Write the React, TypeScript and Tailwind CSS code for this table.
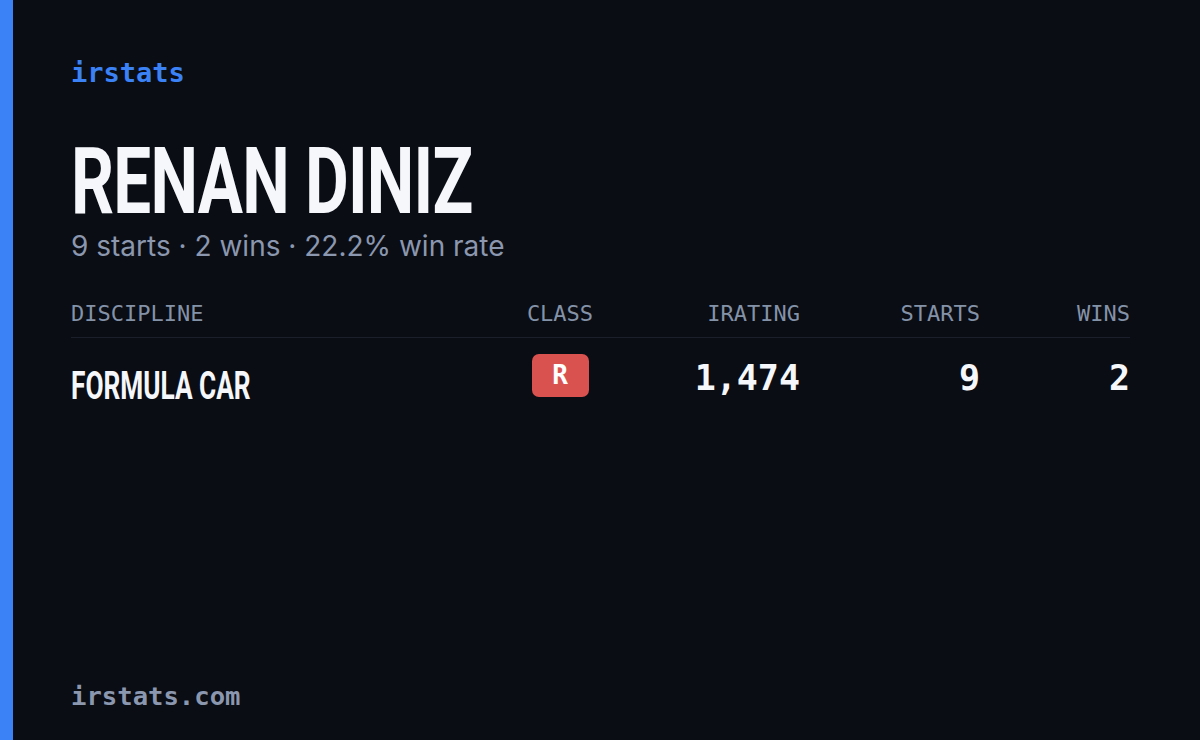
const mono = { fontFamily: '"DejaVu Sans Mono", "Liberation Mono", monospace' };

const rows = [
  { discipline: "FORMULA CAR", cls: "R", irating: "1,474", starts: "9", wins: "2" },
];

export default function App() {
  return (
    <div className="flex h-[740px] w-[1200px] overflow-hidden bg-[#0a0d14]">
      <div className="w-[13px] shrink-0 bg-[#3b82f6]" />
      <div className="flex flex-1 flex-col pl-[58px] pr-[70px]">
        <div
          className="mt-[55px] text-[27px] font-bold leading-[36px] text-[#3b82f6]"
          style={mono}
        >
          irstats
        </div>

        <h1
          className="mt-[48px] h-[86px] origin-left scale-x-[0.731] whitespace-nowrap text-[92px] font-bold leading-[86px] tracking-[-1px] text-[#f5f7fb]"
          style={{ fontFamily: 'Roboto, "Liberation Sans", sans-serif' }}
        >
          RENAN DINIZ
        </h1>
        <div
          className="mt-[2px] text-[28px] leading-[38px] text-[#8b97ae]"
          style={{ fontFamily: 'Inter, "Noto Sans", sans-serif' }}
        >
          9 starts · 2 wins · 22.2% win rate
        </div>

        <div className="mt-[36px]">
          <div
            className="grid grid-cols-[1fr_100px_190px_180px_150px] border-b border-[#1a1f2b] pb-[10px] text-[22px] leading-[26px] text-[#8492a8]"
            style={mono}
          >
            <div>DISCIPLINE</div>
            <div className="text-center">CLASS</div>
            <div className="text-right">IRATING</div>
            <div className="text-right">STARTS</div>
            <div className="text-right">WINS</div>
          </div>
          {rows.map((r) => (
            <div
              key={r.discipline}
              className="grid grid-cols-[1fr_100px_190px_180px_150px] items-start pt-[16px]"
            >
              <div
                className="origin-left scale-x-[0.69] whitespace-nowrap pt-[12px] text-[38px] font-bold leading-[40px] text-[#f5f7fb]"
                style={{ fontFamily: 'Roboto, "Liberation Sans", sans-serif' }}
              >
                {r.discipline}
              </div>
              <div className="flex justify-center">
                <span
                  className="flex h-[43px] w-[57px] items-center justify-center rounded-[7px] bg-[#da524f] text-[26px] font-bold text-white"
                  style={mono}
                >
                  {r.cls}
                </span>
              </div>
              <div className="pt-[2px] text-right text-[35px] font-semibold leading-[44px] text-[#f5f7fb]" style={mono}>
                {r.irating}
              </div>
              <div className="pt-[2px] text-right text-[35px] font-semibold leading-[44px] text-[#f5f7fb]" style={mono}>
                {r.starts}
              </div>
              <div className="pt-[2px] text-right text-[35px] font-semibold leading-[44px] text-[#f5f7fb]" style={mono}>
                {r.wins}
              </div>
            </div>
          ))}
        </div>

        <div
          className="mb-[27px] mt-auto text-[25.6px] font-bold leading-[34px] text-[#8b97ae]"
          style={mono}
        >
          irstats.com
        </div>
      </div>
    </div>
  );
}
